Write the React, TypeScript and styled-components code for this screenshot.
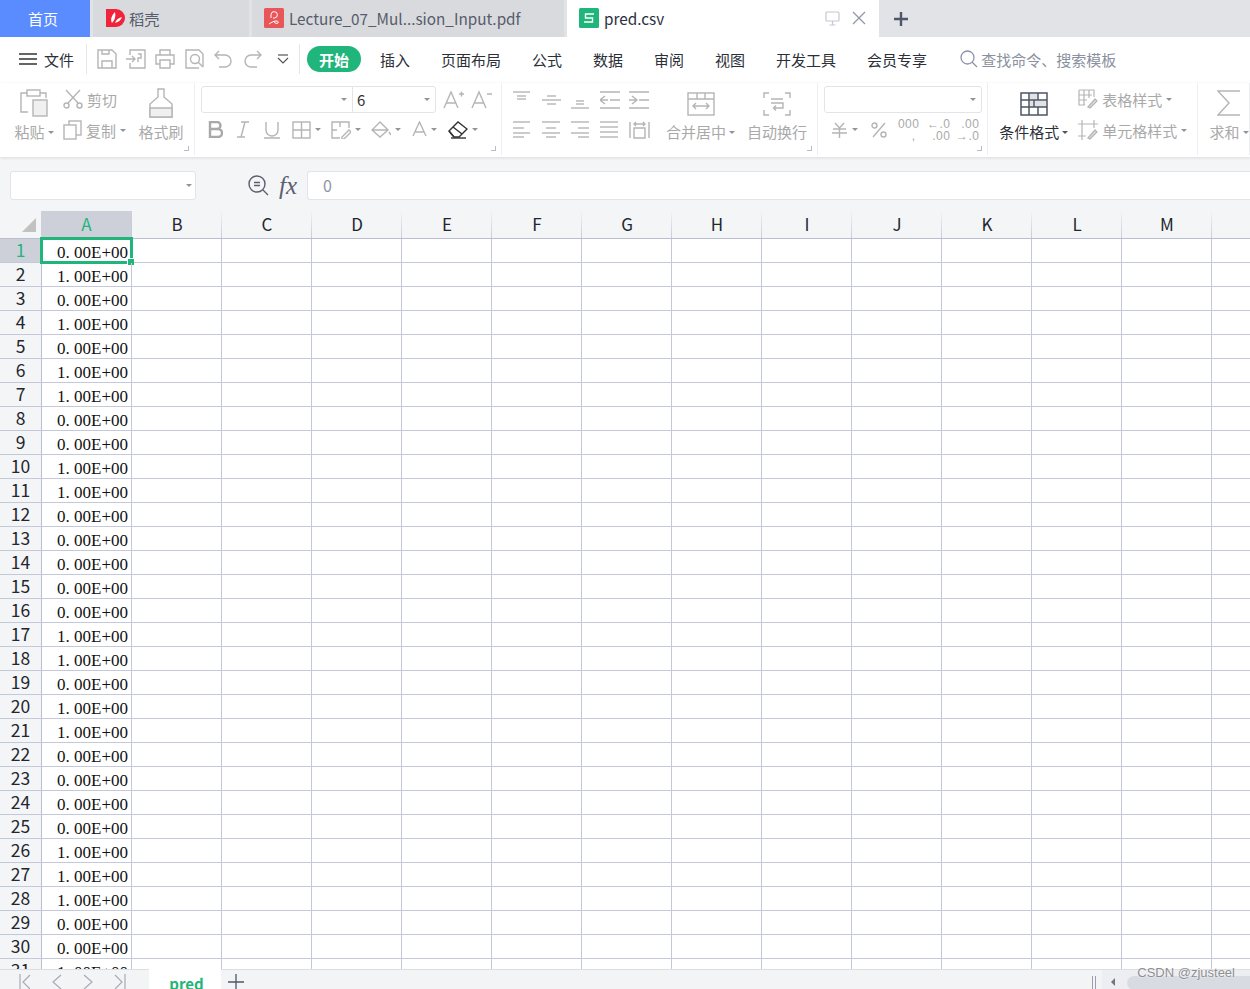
import React from 'react';
import styled, { createGlobalStyle } from 'styled-components';

const GlobalStyle = createGlobalStyle`
  html, body { margin: 0; padding: 0; height: 100%; background: #fff; }
  #root { height: 100%; }
  * { box-sizing: border-box; }
`;

const UI_FONT = `"Noto Sans CJK SC", "Noto Sans", sans-serif`;

const Page = styled.div`
  width: 1250px;
  height: 989px;
  display: flex;
  flex-direction: column;
  overflow: hidden;
  position: relative;
  font-family: ${UI_FONT};
`;

/* ---------- title tabs ---------- */
const TabBar = styled.div`
  height: 37px;
  flex: none;
  display: flex;
  background: #e1e3e7;
`;

const HomeTab = styled.div`
  width: 90px;
  background: #5b8cff;
  color: #fff;
  font-size: 15px;
  display: flex;
  align-items: center;
  justify-content: center;
  margin-right: 3px;
  padding: 0 4px 1px 0;
`;

const DocTab = styled.div<{ $w: number; $active?: boolean; $pl?: number }>`
  width: ${({ $w }) => $w}px;
  margin-right: ${({ $active }) => ($active ? 0 : 3)}px;
  background: ${({ $active }) => ($active ? '#fff' : '#d9dade')};
  color: ${({ $active }) => ($active ? '#2b3040' : '#565c6b')};
  font-size: 15.3px;
  display: flex;
  align-items: center;
  gap: 5px;
  padding-left: ${({ $pl }) => $pl ?? 12}px;
  padding-bottom: 1px;
`;

const TabActions = styled.div`
  margin-left: auto;
  display: flex;
  align-items: center;
  gap: 12px;
  padding-right: 13px;
`;

const NewTab = styled.div`
  display: flex;
  align-items: center;
  margin-left: 14px;
`;

/* ---------- menu row ---------- */
const MenuRow = styled.div`
  height: 46px;
  flex: none;
  display: flex;
  align-items: center;
  padding-bottom: 2px;
  background: #fff;
  font-size: 15px;
  color: #2b2f38;
`;

const FileMenu = styled.div`
  display: flex;
  align-items: center;
  gap: 7px;
  padding-left: 19px;
  width: 86px;
`;

const VRule = styled.div`
  width: 1px;
  height: 30px;
  background: #e4e6ea;
`;

const QuickTools = styled.div`
  display: flex;
  align-items: center;
  padding-left: 10px;
  width: 212px;
`;

const QuickSlot = styled.div<{ $w: number }>`
  width: ${({ $w }) => $w}px;
  display: flex;
`;

const StartPill = styled.div`
  width: 54px;
  height: 26px;
  margin-left: 7px;
  border-radius: 13px;
  background: #1fb57b;
  color: #fff;
  font-weight: 700;
  font-size: 15px;
  display: flex;
  align-items: center;
  justify-content: center;
`;

const MenuItems = styled.div`
  display: flex;
  gap: 31px;
  margin-left: 19px;
`;

const SearchBox = styled.div`
  display: flex;
  align-items: center;
  gap: 3px;
  margin-left: 33px;
  color: #8a90a0;
`;

/* ---------- ribbon ---------- */
const Ribbon = styled.div`
  height: 74px;
  flex: none;
  display: flex;
  background: #fff;
  box-shadow: 0 1px 3px rgba(60, 64, 80, 0.14);
  position: relative;
  z-index: 1;
  font-size: 15px;
  color: #a9a9a9;
`;

const Group = styled.div<{ $w: number; $pl?: number }>`
  width: ${({ $w }) => $w}px;
  height: 72px;
  padding: 3px 0 0 ${({ $pl }) => $pl ?? 0}px;
  border-right: 1px solid #eceef1;
  display: flex;
  position: relative;
`;

const Launcher = styled.span`
  position: absolute;
  right: 5px;
  bottom: 4px;
  width: 5px;
  height: 5px;
  border-right: 1px solid #b8bcc4;
  border-bottom: 1px solid #b8bcc4;
`;

const BigTool = styled.div<{ $w: number; $ml?: number; $dark?: boolean; $top?: number }>`
  width: ${({ $w }) => $w}px;
  margin-left: ${({ $ml }) => $ml ?? 0}px;
  height: 56px;
  padding-top: ${({ $top }) => $top ?? 2}px;
  display: flex;
  flex-direction: column;
  align-items: center;
  justify-content: space-between;
  white-space: nowrap;
  color: ${({ $dark }) => ($dark ? '#2b2f38' : '#a9a9a9')};
`;

const ToolLabel = styled.div`
  display: flex;
  align-items: center;
  gap: 3px;
  height: 20px;
  line-height: 20px;
`;

const StackCol = styled.div<{ $w: number; $ml?: number }>`
  width: ${({ $w }) => $w}px;
  margin-left: ${({ $ml }) => $ml ?? 0}px;
  display: flex;
  flex-direction: column;
  gap: 11px;
  padding-top: 3px;
`;

const SmallTool = styled.div`
  display: flex;
  align-items: center;
  gap: 4px;
  height: 20px;
  white-space: nowrap;
`;

const Caret = styled.span<{ $color?: string }>`
  display: inline-block;
  width: 0;
  height: 0;
  flex: none;
  border-left: 3px solid transparent;
  border-right: 3px solid transparent;
  border-top: 3px solid ${({ $color }) => $color ?? '#8f949e'};
`;

const ColStack = styled.div`
  display: flex;
  flex-direction: column;
  gap: 3px;
`;

const ToolRow = styled.div`
  display: flex;
  align-items: center;
  height: 27px;
`;

const Spot = styled.div<{ $w: number; $ml?: number }>`
  width: ${({ $w }) => $w}px;
  margin-left: ${({ $ml }) => $ml ?? 0}px;
  flex: none;
  display: flex;
  align-items: center;
  gap: 4px;
  white-space: nowrap;
`;

const ComboBox = styled.div<{ $w: number; $radius?: string }>`
  width: ${({ $w }) => $w}px;
  height: 27px;
  border: 1px solid #e2e4e8;
  border-radius: ${({ $radius }) => $radius ?? '3px'};
  background: #fff;
  display: flex;
  align-items: center;
  justify-content: space-between;
  padding: 0 5px 0 4px;
  color: #333;
  font-size: 15px;
  margin-left: ${({ $radius }) => ($radius === '0 3px 3px 0' ? -1 : 0)}px;
`;

const NumberGlyph = styled.div`
  font-family: "Liberation Sans", sans-serif;
  font-size: 12px;
  line-height: 12px;
  letter-spacing: 0.4px;
  color: #a9a9a9;
  text-align: right;
  white-space: pre;
`;

/* ---------- formula bar ---------- */
const FormulaBar = styled.div`
  height: 54px;
  flex: none;
  background: #f4f5f7;
  display: flex;
  align-items: center;
  padding: 3px 0 0 10px;
`;

const NameBox = styled.div`
  width: 186px;
  height: 29px;
  border: 1px solid #e2e4e8;
  border-radius: 3px;
  background: #fff;
  display: flex;
  align-items: center;
  justify-content: flex-end;
  padding-right: 3px;
`;

const FxGroup = styled.div`
  display: flex;
  align-items: center;
  margin-left: 52px;
  width: 59px;
  gap: 10px;
`;

const FxMark = styled.span`
  font-family: "Liberation Serif", serif;
  font-style: italic;
  font-size: 25px;
  color: #5b6070;
  line-height: 1;
`;

const FormulaInput = styled.div`
  flex: 1;
  height: 29px;
  border: 1px solid #e2e4e8;
  border-right: 0;
  border-radius: 3px 0 0 3px;
  background: #fff;
  color: #8e96a8;
  font-size: 16px;
  display: flex;
  align-items: center;
  padding: 0 0 2px 15px;
`;

/* ---------- sheet ---------- */
const Sheet = styled.div`
  flex: 1;
  min-height: 0;
  overflow: hidden;
  background: #fff;
`;

const HeaderRow = styled.div`
  display: flex;
  height: 28px;
  background: #f4f5f7;
  border-bottom: 1px solid #b9bfce;
`;

const Corner = styled.div`
  width: 41px;
  flex: none;
  position: relative;
  &::after {
    content: '';
    position: absolute;
    left: 22px;
    top: 7px;
    width: 0;
    height: 0;
    border-style: solid;
    border-width: 0 0 14px 14px;
    border-color: transparent transparent #c2c2c2 transparent;
  }
`;

const ColHead = styled.div<{ $active?: boolean }>`
  width: ${({ $active }) => ($active ? 91 : 90)}px;
  flex: none;
  font-size: 17px;
  line-height: 26px;
  text-align: center;
  padding-left: 1px;
  color: ${({ $active }) => ($active ? '#1fb57b' : '#23262e')};
  background: ${({ $active }) => ($active ? '#cdd0d8' : 'transparent')};
  border-right: 1px solid #c4c9d9;
  border-image: linear-gradient(to bottom, transparent, #c4c9d9) 1;
`;

const Row = styled.div`
  display: flex;
  height: 24px;
  border-bottom: 1px solid #c4c9d9;
`;

const RowHead = styled.div<{ $active?: boolean }>`
  width: 42px;
  flex: none;
  font-size: 17.5px;
  line-height: 22px;
  text-align: center;
  color: ${({ $active }) => ($active ? '#1fb57b' : '#23262e')};
  background: ${({ $active }) => ($active ? '#cdd0d8' : '#f4f5f7')};
  border-right: 1px solid #b9bfce;
`;

const Cell = styled.div`
  width: 90px;
  flex: none;
  position: relative;
  border-right: 1px solid #c4c9d9;
  font-family: "Liberation Serif", serif;
  font-size: 17px;
  line-height: 27px;
  color: #111;
  text-align: right;
  padding-right: 3px;
  white-space: pre;
`;

const Selection = styled.span`
  position: absolute;
  left: -2px;
  top: -2px;
  width: 93px;
  height: 27px;
  border: 3px solid #1fb57b;
  pointer-events: none;
  &::after {
    content: '';
    position: absolute;
    right: -4px;
    bottom: -4px;
    width: 6px;
    height: 6px;
    background: #1fb57b;
    border: 1px solid #fff;
    border-width: 1px 0 0 1px;
  }
`;

/* ---------- sheet tabs ---------- */
const SheetBar = styled.div`
  height: 20px;
  flex: none;
  display: flex;
  background: #f3f4f6;
  border-top: 1px solid #dcdee3;
  position: relative;
`;

const NavArrows = styled.div`
  width: 149px;
  display: flex;
  align-items: flex-start;
  padding: 4px 0 0 19px;
  gap: 21px;
`;

const SheetTab = styled.div`
  width: 72px;
  height: 21px;
  margin-top: -1px;
  padding-left: 3px;
  background: #fff;
  color: #1fb57b;
  font-weight: 700;
  font-size: 15px;
  text-align: center;
  line-height: 30px;
`;

const AddSheet = styled.div`
  margin: 4px 0 0 7px;
  display: flex;
`;

const ScrollArea = styled.div`
  margin-left: auto;
  width: 158px;
  display: flex;
  align-items: flex-start;
`;

const Splitter = styled.div`
  width: 10px;
  height: 14px;
  margin-top: 6px;
  border-left: 1px solid #9aa0ad;
  position: relative;
  &::after {
    content: '';
    position: absolute;
    left: 2px;
    top: 0;
    height: 14px;
    border-left: 1px solid #9aa0ad;
  }
`;

const ScrollTrack = styled.div`
  flex: 1;
  height: 20px;
  background: #eceef1;
  display: flex;
  align-items: center;
  padding-left: 9px;
`;

const ScrollTip = styled.span`
  width: 0;
  height: 0;
  border-style: solid;
  border-width: 4px 4px 4px 0;
  border-color: transparent #6f7686 transparent transparent;
  margin-top: 4px;
`;

const ScrollThumb = styled.div`
  margin-left: 12px;
  flex: 1;
  height: 14px;
  margin-top: 6px;
  border-radius: 7px 0 0 7px;
  background: #d8dbe2;
`;

const Watermark = styled.div`
  position: absolute;
  right: 15px;
  bottom: 9px;
  font-family: "Liberation Sans", sans-serif;
  font-size: 13px;
  color: #8f8f8f;
  text-shadow: 0 0 2px #fff;
`;

/* ---------- icons ---------- */
const G = ({ w, h, c = '#b5b5b5', sw = 1.4, children }: { w: number; h: number; c?: string; sw?: number; children: React.ReactNode }) => (
  <svg width={w} height={h} viewBox={`0 0 ${w} ${h}`} fill="none" stroke={c} strokeWidth={sw} style={{ display: 'block', flex: 'none' }}>
    {children}
  </svg>
);

const lines = (rows: [number, number, number][]) => rows.map(([y, a, b]) => <path key={`${y}-${a}`} d={`M${a} ${y}H${b}`} />);

const AlignIcon = ({ rows }: { rows: [number, number, number][] }) => <G w={22} h={18}>{lines(rows)}</G>;

const preds = [0, 1, 0, 1, 0, 1, 1, 0, 0, 1, 1, 0, 0, 0, 0, 0, 1, 1, 0, 1, 1, 0, 0, 0, 0, 1, 1, 1, 0, 0, 1];
const columns = ['A', 'B', 'C', 'D', 'E', 'F', 'G', 'H', 'I', 'J', 'K', 'L', 'M', 'N'];
const menus = ['插入', '页面布局', '公式', '数据', '审阅', '视图', '开发工具', '会员专享'];

export default function App() {
  return (
    <Page>
      <GlobalStyle />
      <TabBar>
        <HomeTab>首页</HomeTab>
        <DocTab $w={156} $pl={13}>
          <svg width="20" height="20" viewBox="0 0 20 20" style={{ flex: 'none', marginRight: -2 }}>
            <path d="M0 1H10A9 9 0 0 1 10 19H0Z" fill="#f0243a" />
            <path d="M6 15C4 11 6 7 9 4C10 8 9 12 6 15ZM9 15C10 12 12 10 16 9C15 12 13 14 9 15Z" fill="#fff" />
          </svg>
          稻壳
        </DocTab>
        <DocTab $w={312}>
          <svg width="20" height="20" viewBox="0 0 20 20" style={{ flex: 'none' }}>
            <rect width="20" height="20" rx="1.5" fill="#e9565a" />
            <path d="M7 10V6.5A3.2 3.2 0 1 1 10.5 10H9M5 16C7 15 9 13 12 13C14 13 15 14 14 15C13 16 11 15 10 14" fill="none" stroke="#fff" strokeWidth="1" />
          </svg>
          Lecture_07_Mul...sion_Input.pdf
        </DocTab>
        <DocTab $w={312} $active>
          <svg width="20" height="20" viewBox="0 0 20 20" style={{ flex: 'none' }}>
            <rect width="20" height="20" rx="1.5" fill="#1fb57b" />
            <path d="M15 6H6.5V10H13.5V14H5" fill="none" stroke="#fff" strokeWidth="1.4" />
          </svg>
          pred.csv
          <TabActions>
            <G w={15} h={15} c="#c3c8d2" sw={1.2}>
              <rect x="1" y="1" width="13" height="9" rx="1" />
              <path d="M7.5 10V14M4.5 14H10.5" />
            </G>
            <G w={14} h={14} c="#8f95a3" sw={1.2}><path d="M1 1L13 13M13 1L1 13" /></G>
          </TabActions>
        </DocTab>
        <NewTab>
          <G w={16} h={16} c="#4e5669" sw={2.4}><path d="M8 1V15M1 8H15" /></G>
        </NewTab>
      </TabBar>

      <MenuRow>
        <FileMenu>
          <G w={18} h={14} c="#333" sw={1.3}><path d="M0 2H18M0 7H18M0 12H18" /></G>
          文件
        </FileMenu>
        <VRule />
        <QuickTools>
          <QuickSlot $w={29}><G w={20} h={20}><path d="M1 1H15L19 5V19H1ZM5 19V12H15V19M5 1V5H12V1" /></G></QuickSlot>
          <QuickSlot $w={29}><G w={20} h={20}><path d="M4 6V1H19V19H4V14M0 10H9M6 7L9 10L6 13M12 5H15V9H12V13" /></G></QuickSlot>
          <QuickSlot $w={30}><G w={20} h={20}><path d="M5 6V1H15V6M5 15H1V6H19V15H15M5 11H15V19H5Z" /></G></QuickSlot>
          <QuickSlot $w={29}><G w={20} h={20}><path d="M18 18V5L14 1H1V19H14" /><circle cx="10" cy="10" r="4.5" /><path d="M13 13L18 18" /></G></QuickSlot>
          <QuickSlot $w={30}><G w={18} h={18}><path d="M5 1L1 5L5 9M1 5H11A6 6 0 0 1 11 17H5" /></G></QuickSlot>
          <QuickSlot $w={33}><G w={18} h={18}><path d="M13 1L17 5L13 9M17 5H7A6 6 0 0 0 7 17H13" /></G></QuickSlot>
          <QuickSlot $w={22}><G w={12} h={10} c="#555" sw={1.2}><path d="M1 1H11" /><path d="M1 4L6 9L11 4" /></G></QuickSlot>
        </QuickTools>
        <VRule />
        <StartPill>开始</StartPill>
        <MenuItems>
          {menus.map(m => <span key={m}>{m}</span>)}
        </MenuItems>
        <SearchBox>
          <G w={18} h={18} c="#8a93a8" sw={1.3}><circle cx="7.5" cy="7.5" r="6.5" /><path d="M12 12L17 17" /></G>
          查找命令、搜索模板
        </SearchBox>
      </MenuRow>

      <Ribbon>
        <Group $w={195} $pl={14}>
          <BigTool $w={40} $top={2}>
            <G w={28} h={30}>
              <path d="M20 5H26V10M8 24H1V5H7" />
              <rect x="7" y="2" width="13" height="6" />
              <rect x="13" y="12" width="14" height="16" fill="#f0f0f0" />
            </G>
            <ToolLabel>粘贴<Caret /></ToolLabel>
          </BigTool>
          <StackCol $w={75} $ml={9}>
            <SmallTool>
              <G w={20} h={20}>
                <circle cx="3.5" cy="16.5" r="2.5" /><circle cx="16.5" cy="16.5" r="2.5" />
                <path d="M5 14L17 1M15 14L3 1" />
              </G>
              剪切
            </SmallTool>
            <SmallTool>
              <G w={19} h={20}><rect x="6" y="1" width="12" height="14" /><rect x="1" y="5" width="12" height="14" fill="#fff" /></G>
              复制<Caret />
            </SmallTool>
          </StackCol>
          <BigTool $w={46} $top={2}>
            <G w={24} h={30}>
              <path d="M9 1H15V9L23 16V29H1V16L9 9Z" />
              <path d="M1 20H23V29H1Z" fill="#f0f0f0" />
            </G>
            <ToolLabel>格式刷</ToolLabel>
          </BigTool>
          <Launcher />
        </Group>

        <Group $w={307} $pl={6}>
          <ColStack>
            <ToolRow>
              <ComboBox $w={152} $radius="3px 0 0 3px"><span /><Caret /></ComboBox>
              <ComboBox $w={84} $radius="0 3px 3px 0">6<Caret /></ComboBox>
              <Spot $w={22} $ml={7}>
                <G w={22} h={20}><path d="M1 18L8 2L15 18M3.5 13H12.5M16 4H21M18.5 1.5V6.5" /></G>
              </Spot>
              <Spot $w={22} $ml={6}>
                <G w={22} h={20}><path d="M1 18L8 2L15 18M3.5 13H12.5M16 4H21" /></G>
              </Spot>
            </ToolRow>
            <ToolRow>
              <Spot $w={28} $ml={7}>
                <G w={15} h={17} sw={2.4} c="#a9a9a9"><path d="M2 1H9A3.5 3.5 0 0 1 9 8H2ZM2 8H10A4 4 0 0 1 10 16H2Z" /></G>
              </Spot>
              <Spot $w={27}><G w={14} h={17}><path d="M5 1H13M1 16H9M9 1L5 16" /></G></Spot>
              <Spot $w={29}><G w={18} h={18}><path d="M3 1V9A6 6 0 0 0 15 9V1M1 17H17" /></G></Spot>
              <Spot $w={39}><G w={19} h={18}><rect x="1" y="1" width="17" height="16" /><path d="M9.5 1V17M1 9H18" /></G><Caret /></Spot>
              <Spot $w={40}><G w={20} h={18}><path d="M18 7V1H1V17H9M1 9H6M9 1V6" /><path d="M11 16L18 9L20 11L13 18H11Z" /></G><Caret /></Spot>
              <Spot $w={41}><G w={20} h={18}><path d="M1 9L9 1L17 9L9 16ZM1 9H17M18 11L20 14" /></G><Caret /></Spot>
              <Spot $w={36}><G w={15} h={17}><path d="M1 15L7.5 1L14 15M3 11H12" /></G><Caret /></Spot>
              <Spot $w={30}>
                <G w={20} h={18} c="#333"><path d="M1 10L10 1L19 8L11 16H6Z" /><path d="M1 10L6 16M5 6L14 13" /><path d="M3 17H18" /></G>
                <Caret />
              </Spot>
            </ToolRow>
          </ColStack>
          <Launcher />
        </Group>

        <Group $w={316} $pl={11}>
          <ColStack>
            <ToolRow>
              <Spot $w={29}><AlignIcon rows={[[1, 0, 17], [5, 4, 13], [8, 4, 13]]} /></Spot>
              <Spot $w={29}><AlignIcon rows={[[5, 5, 14], [9, 0, 19], [13, 5, 14]]} /></Spot>
              <Spot $w={29}><AlignIcon rows={[[10, 5, 13], [13, 5, 13], [17, 0, 18]]} /></Spot>
              <Spot $w={29}><G w={22} h={18}><path d="M0 1H20M10 9H20M0 17H20M5 5L0 9L5 13M0 9H8" /></G></Spot>
              <Spot $w={29}><G w={22} h={18}><path d="M0 1H20M10 9H20M0 17H20M3 5L8 9L3 13M0 9H8" /></G></Spot>
            </ToolRow>
            <ToolRow>
              <Spot $w={29}><AlignIcon rows={[[1, 0, 17], [7, 0, 11], [12, 0, 17], [16, 0, 11]]} /></Spot>
              <Spot $w={29}><AlignIcon rows={[[1, 0, 18], [7, 4, 14], [12, 0, 18], [16, 4, 14]]} /></Spot>
              <Spot $w={29}><AlignIcon rows={[[1, 0, 18], [7, 7, 18], [12, 0, 18], [16, 7, 18]]} /></Spot>
              <Spot $w={29}><AlignIcon rows={[[1, 0, 18], [6, 0, 18], [11, 0, 18], [16, 0, 18]]} /></Spot>
              <Spot $w={29}><G w={22} h={18}><path d="M1 1V17M20 1V17M5 17H16V7H5ZM5 3H16M7 1L5 3L7 5M14 1L16 3L14 5" /></G></Spot>
            </ToolRow>
          </ColStack>
          <BigTool $w={69} $ml={8} $top={6}>
            <G w={28} h={24}>
              <rect x="1" y="1" width="26" height="22" />
              <path d="M1 7H27M10 1V7M18 1V7M6 14H22M9 11L6 14L9 17M19 11L22 14L19 17" />
            </G>
            <ToolLabel>合并居中<Caret /></ToolLabel>
          </BigTool>
          <BigTool $w={60} $ml={12} $top={6}>
            <G w={28} h={24}>
              <path d="M6 1H1V6M22 1H27V6M1 18V23H6M27 18V23H22M8 7H20M8 11H20V16H11M13 13.5L10.5 16L13 18.5" />
            </G>
            <ToolLabel>自动换行</ToolLabel>
          </BigTool>
          <Launcher />
        </Group>

        <Group $w={170} $pl={6}>
          <ColStack>
            <ToolRow>
              <ComboBox $w={158}><span /><Caret /></ComboBox>
            </ToolRow>
            <ToolRow>
              <Spot $w={40} $ml={7}>
                <G w={17} h={16}><path d="M4 1L8.5 6L13 1M2 7H15M1 11H16M8.5 6V16" /></G>
                <Caret />
              </Spot>
              <Spot $w={27}>
                <G w={16} h={16}><circle cx="3.5" cy="3.5" r="2.5" /><circle cx="12.5" cy="12.5" r="2.5" /><path d="M14 1L2 15" /></G>
              </Spot>
              <Spot $w={29}>
                <NumberGlyph>{'000\n , '}</NumberGlyph>
              </Spot>
              <Spot $w={29}>
                <NumberGlyph>{'←.0\n.00'}</NumberGlyph>
              </Spot>
              <Spot $w={21}>
                <NumberGlyph>{'.00\n→.0'}</NumberGlyph>
              </Spot>
            </ToolRow>
          </ColStack>
          <Launcher />
        </Group>

        <Group $w={210} $pl={11}>
          <BigTool $w={70} $dark $top={6}>
            <G w={28} h={24} c="#4e5562" sw={1.5}>
              <path d="M10 2H17V8H10ZM10 9H13V15H10ZM15 9H26V15H15Z" fill="#e2e3e6" stroke="none" />
              <rect x="1" y="1" width="26" height="22" />
              <path d="M1 8H27M1 15H27M9 1V23M18 1V8M18 15V23M14 8V15" />
            </G>
            <ToolLabel>条件格式<Caret $color="#555" /></ToolLabel>
          </BigTool>
          <StackCol $w={120} $ml={10}>
            <SmallTool>
              <G w={20} h={20} sw={1.2}><path d="M1 1H16V8M1 1V16H7M1 6H14M1 11H9M6 1V16M11 1V9" /><path d="M10 18L17 10L19 12L12 19Z" fill="#ddd" /></G>
              表格样式<Caret />
            </SmallTool>
            <SmallTool>
              <G w={20} h={20} sw={1.2}><path d="M4 0V20M0 4H20M16 0V8M0 16H8" /><path d="M10 18L17 10L19 12L12 19Z" fill="#ddd" /></G>
              单元格样式<Caret />
            </SmallTool>
          </StackCol>
        </Group>

        <Group $w={52} $pl={11}>
          <BigTool $w={40} $top={4}>
            <G w={24} h={26}><path d="M23 1H1L12 13L1 25H23" /></G>
            <ToolLabel>求和<Caret /></ToolLabel>
          </BigTool>
        </Group>
      </Ribbon>

      <FormulaBar>
        <NameBox><Caret /></NameBox>
        <FxGroup>
          <G w={21} h={21} c="#5b6070"><circle cx="9" cy="9" r="8" /><path d="M6 7.5H12M6 10.5H12M15 15L20 20" /></G>
          <FxMark>fx</FxMark>
        </FxGroup>
        <FormulaInput>0</FormulaInput>
      </FormulaBar>

      <Sheet>
        <HeaderRow>
          <Corner />
          {columns.map((c, i) => <ColHead key={c} $active={i === 0}>{c}</ColHead>)}
        </HeaderRow>
        {preds.map((v, i) => (
          <Row key={i}>
            <RowHead $active={i === 0}>{i + 1}</RowHead>
            {columns.map((c, j) => (
              <Cell key={c}>
                {j === 0 ? `${v}. 00E+00` : ''}
                {j === 0 && i === 0 ? <Selection /> : null}
              </Cell>
            ))}
          </Row>
        ))}
      </Sheet>

      <SheetBar>
        <NavArrows>
          <G w={12} h={16} c="#a6abb6" sw={1.2}><path d="M1 0V16M11 1L4 8L11 15" /></G>
          <G w={10} h={16} c="#a6abb6" sw={1.2}><path d="M9 1L1 8L9 15" /></G>
          <G w={10} h={16} c="#a6abb6" sw={1.2}><path d="M1 1L9 8L1 15" /></G>
          <G w={12} h={16} c="#a6abb6" sw={1.2}><path d="M11 0V16M1 1L8 8L1 15" /></G>
        </NavArrows>
        <SheetTab>pred</SheetTab>
        <AddSheet>
          <G w={16} h={16} c="#4e5669" sw={1.3}><path d="M8 0V16M0 8H16" /></G>
        </AddSheet>
        <ScrollArea>
          <Splitter />
          <ScrollTrack>
            <ScrollTip />
            <ScrollThumb />
          </ScrollTrack>
        </ScrollArea>
      </SheetBar>
      <Watermark>CSDN @zjusteel</Watermark>
    </Page>
  );
}
